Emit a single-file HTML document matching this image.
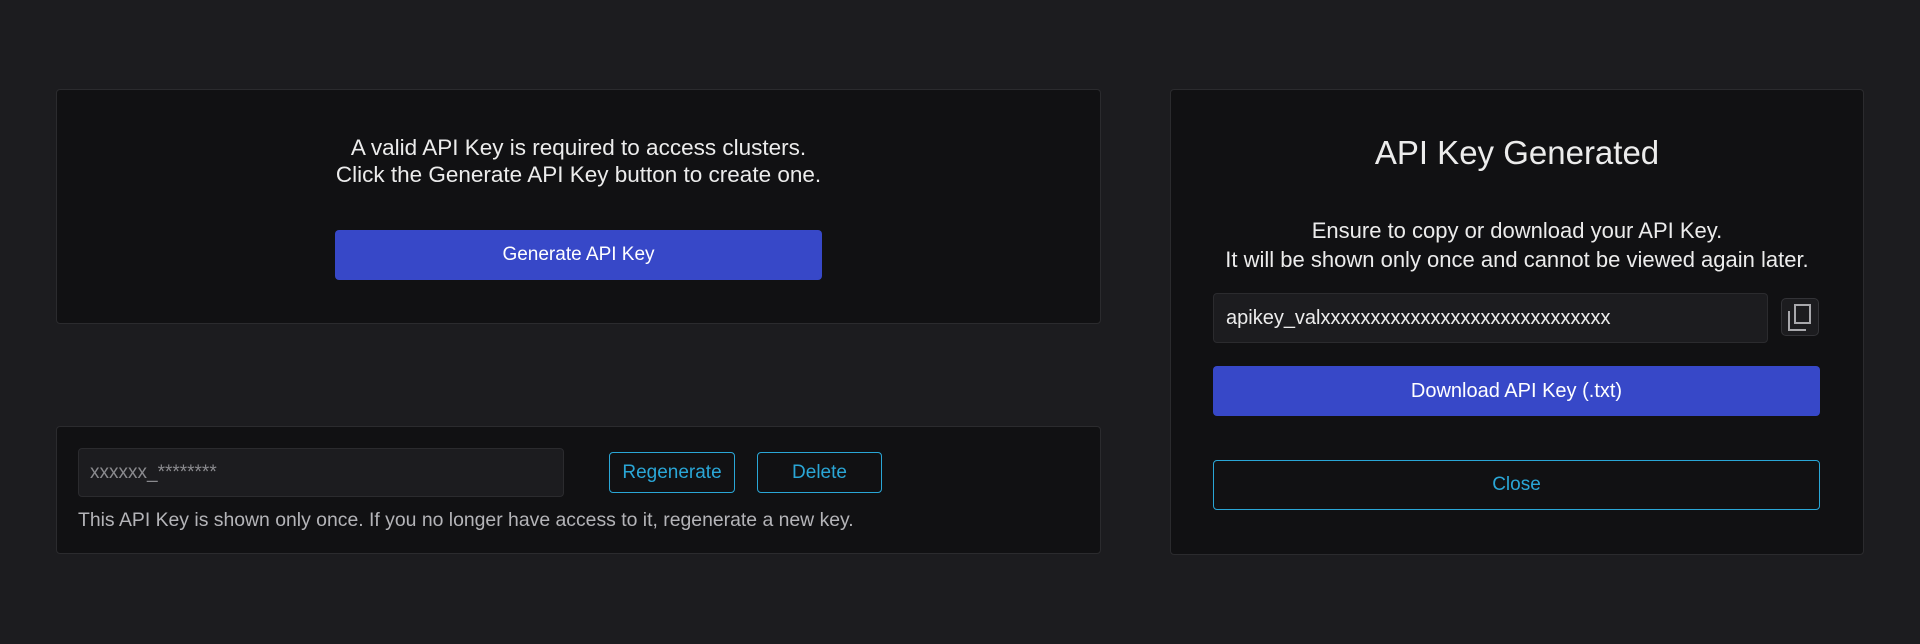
<!DOCTYPE html>
<html><head><meta charset="utf-8"><style>
*{box-sizing:border-box;margin:0;padding:0}
body{width:1920px;height:644px;background:#1c1c1f;font-family:"Liberation Sans",sans-serif;position:relative;overflow:hidden}
.card{position:absolute;background:#111113;border:1px solid #2b2b2e;border-radius:4px}
.abs{position:absolute}
.t{color:#ececec;text-align:center;font-size:22px;line-height:29px;white-space:nowrap}
.btn{position:absolute;background:#3748c8;color:#fff;border-radius:4px;display:flex;align-items:center;justify-content:center;font-size:19px}
.ob{position:absolute;border:1.5px solid #2aa6d6;color:#2aa6d6;border-radius:4px;display:flex;align-items:center;justify-content:center;font-size:19px}
.inp{position:absolute;background:#1c1c1f;border:1px solid #2b2b2e;border-radius:4px;display:flex;align-items:center;font-size:18px}
</style></head><body>
<div class="card" style="left:56px;top:89px;width:1045px;height:235px"></div>
<div class="abs t" style="left:56px;top:134px;width:1045px;font-size:22.5px;line-height:27px">A valid API Key is required to access clusters.<br>Click the Generate API Key button to create one.</div>
<div class="btn" style="left:335px;top:230px;width:487px;height:50px">Generate API Key</div>

<div class="card" style="left:56px;top:426px;width:1045px;height:128px"></div>
<div class="inp" style="left:78px;top:448px;width:486px;height:49px;padding-left:11px;color:#8a8a8e;font-size:19px">xxxxxx_********</div>
<div class="ob" style="left:609px;top:452px;width:126px;height:41px">Regenerate</div>
<div class="ob" style="left:757px;top:452px;width:125px;height:41px">Delete</div>
<div class="abs" style="left:78px;top:508px;font-size:19.4px;color:#b4b4b8;line-height:24px;white-space:nowrap">This API Key is shown only once. If you no longer have access to it, regenerate a new key.</div>

<div class="card" style="left:1170px;top:89px;width:694px;height:466px"></div>
<div class="abs" style="left:1170px;top:133px;width:694px;text-align:center;color:#ececec;font-size:33px;line-height:40px">API Key Generated</div>
<div class="abs t" style="left:1170px;top:216px;width:694px">Ensure to copy or download your API Key.<br>It will be shown only once and cannot be viewed again later.</div>
<div class="inp" style="left:1213px;top:293px;width:555px;height:50px;padding-left:12px;color:#ececec;font-size:20px">apikey_valxxxxxxxxxxxxxxxxxxxxxxxxxxxxx</div>
<div class="abs" style="left:1781px;top:298px;width:38px;height:38px;background:#1c1c1f;border:1px solid #333337;border-radius:5px">
<svg width="38" height="38" viewBox="0 0 38 38" style="position:absolute;left:-1px;top:-1px"><path d="M8 13 V32 H25" fill="none" stroke="#a8a8ac" stroke-width="2"/><rect x="14" y="7" width="15" height="18" fill="none" stroke="#a8a8ac" stroke-width="2"/></svg></div>
<div class="btn" style="left:1213px;top:366px;width:607px;height:50px;font-size:20px">Download API Key (.txt)</div>
<div class="ob" style="left:1213px;top:460px;width:607px;height:50px">Close</div>
</body></html>
